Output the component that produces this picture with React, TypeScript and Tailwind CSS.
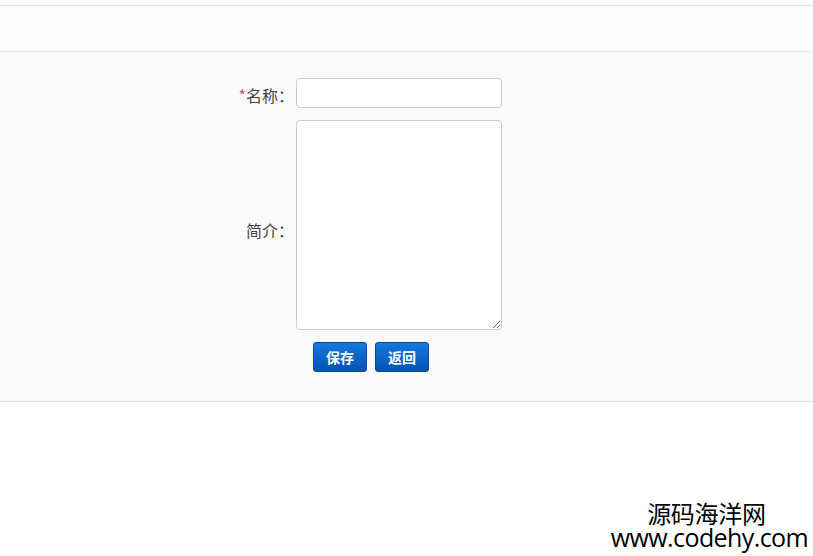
import React, { useState } from 'react'

function App() {
  const [name, setName] = useState("");
  const [intro, setIntro] = useState("");

  return (
    <div className="relative min-h-[556px] w-full bg-white font-['Noto_Sans_CJK_SC','Liberation_Sans',sans-serif] text-[#333]">
      <div className="h-[5px] bg-white" />
      <div className="h-[47px] border-y border-[#e2e2e2] bg-[#fcfcfc]" />
      <div className="border-b border-[#dddddd] bg-[#fafafa] pt-[26px] pb-[29px]">
        <div className="grid grid-cols-[296px_206px] items-center gap-y-[12px]">
          <label className="pr-[2px] pt-[4px] text-right text-[16px] text-[#444]">
            <span className="text-[#d9534f]">*</span>名称：
          </label>
          <input
            className="h-[30px] w-[206px] rounded-[4px] border border-[#cccccc] bg-white px-2 text-[14px] outline-none"
            value={name}
            onChange={(e) => setName(e.target.value)}
          />
          <label className="pr-[2px] pt-[10px] text-right text-[16px] text-[#444]">简介：</label>
          <textarea
            className="block h-[210px] w-[206px] rounded-[4px] border border-[#cccccc] bg-white px-2 py-1 text-[14px] outline-none"
            value={intro}
            onChange={(e) => setIntro(e.target.value)}
          />
          <div />
          <div className="flex gap-[8px] pl-[17px]">
            <button className="h-[30px] w-[54px] rounded-[3px] border border-[#0446a0] bg-gradient-to-b from-[#1479de] to-[#0553b3] text-[14px] font-bold text-white">
              保存
            </button>
            <button className="h-[30px] w-[54px] rounded-[3px] border border-[#0446a0] bg-gradient-to-b from-[#1479de] to-[#0553b3] text-[14px] font-bold text-white">
              返回
            </button>
          </div>
        </div>
      </div>
      <div className="absolute right-[5px] top-[500px] flex flex-col items-center text-black">
        <span className="pr-[6px] text-[24px] leading-[25px] tracking-[-0.3px]">源码海洋网</span>
        <span className="font-['Open_Sans','Liberation_Sans',sans-serif] text-[25px] leading-[24px] tracking-[-0.6px]">www.codehy.com</span>
      </div>
    </div>
  )
}

export default App
